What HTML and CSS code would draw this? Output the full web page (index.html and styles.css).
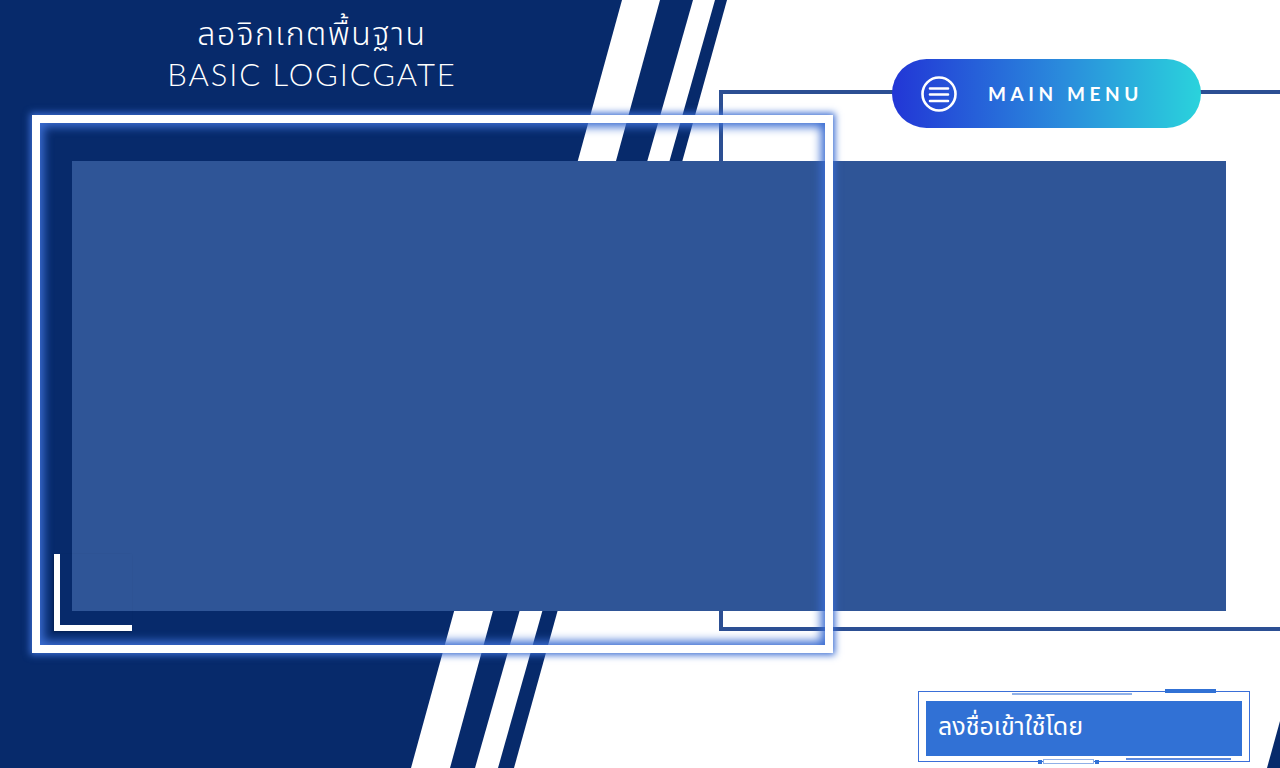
FILE: index.html
```html
<!DOCTYPE html>
<html lang="th">
<head>
<meta charset="utf-8">
<title>ลอจิกเกตพื้นฐาน - Basic Logicgate</title>
<link rel="stylesheet" href="styles.css">
</head>
<body>
<div class="stage">

  <!-- background stripes -->
  <svg class="bg" width="1280" height="768" viewBox="0 0 1280 768">
    <polygon points="0,0 622,0 411,768 0,768" fill="#072a6b"/>
    <polygon points="660,0 693,0 475,768 450,768" fill="#072a6b"/>
    <polygon points="715,0 727,0 514,768 498,768" fill="#072a6b"/>
    <polygon points="1267,768 1280,721 1280,768" fill="#072a6b"/>
  </svg>

  <div class="outline"></div>

  <div class="title">
    <div class="title-th">ลอจิกเกตพื้นฐาน</div>
    <div class="title-en">BASIC LOGICGATE</div>
  </div>

  <div class="screen"></div>

  <div class="frame"></div>
  <div class="corner"></div>

  <a class="menu" href="#">
    <svg class="menu-icon" width="38" height="38" viewBox="0 0 38 38">
      <circle cx="19" cy="19" r="16.5" fill="none" stroke="#fff" stroke-width="2.6"/>
      <path d="M10 13.5h18M10 19.5h18M10 26h18" stroke="#fff" stroke-width="2.6" stroke-linecap="round"/>
    </svg>
    <span>MAIN MENU</span>
  </a>

  <div class="login">
    <div class="login-top-line"></div>
    <div class="login-top-bar"></div>
    <div class="login-box">ลงชื่อเข้าใช้โดย</div>
    <div class="login-bottom-pill"></div>
    <div class="login-bottom-line"></div>
  </div>

</div>
</body>
</html>
```

FILE: styles.css
```css
body {
 margin: 0;
 background: #fff;
 font-family: "Noto Sans Thai", "Noto Sans", "DejaVu Sans", sans-serif;
}

.stage {
 position: relative;
 width: 1280px;
 height: 768px;
 overflow: hidden;
 background: #fff;
}

.bg {
 position: absolute;
 left: 0;
 top: 0;
}

/* right hand outline box */
.outline {
 position: absolute;
 left: 719px;
 top: 90px;
 width: 600px;
 height: 533px;
 border: 4px solid #2c4f93;
}

.title {
 position: relative;
 width: 624px;
 height: 161px;
 box-sizing: border-box;
 padding-top: 14px;
 text-align: center;
 color: #fff;
}
.title-th {
 font-size: 32px;
 font-weight: 300;
 line-height: 42px;
 letter-spacing: 1.5px;
}
.title-en {
 font-family: Lato, "Noto Sans", sans-serif;
 font-weight: 300;
 font-size: 31px;
 line-height: 36px;
 letter-spacing: 1.9px;
}

.screen {
 position: relative;
 margin-left: 72px;
 width: 1154px;
 height: 450px;
 background: #2f5597;
}

/* glowing white frame over the left half */
.frame {
 position: absolute;
 left: 32px;
 top: 115px;
 width: 785px;
 height: 522px;
 border: 8px solid #fff;
 box-shadow: 0 0 7px 2px #3b6dd2, inset 0 0 10px 4px #3b6dd2;
}

.corner {
 position: absolute;
 left: 54px;
 top: 554px;
 width: 72px;
 height: 71px;
 border-left: 6px solid #fff;
 border-bottom: 6px solid #fff;
 box-shadow: -1px 1px 2px rgba(0,0,0,.25);
}

.menu {
 position: absolute;
 left: 892px;
 top: 59px;
 width: 309px;
 height: 69px;
 box-sizing: border-box;
 padding-left: 28px;
 border-radius: 35px;
 background: linear-gradient(90deg, #2236d6 0%, #2a8bdc 55%, #2ad3dc 100%);
 display: flex;
 align-items: center;
 gap: 30px;
 color: #fff;
 text-decoration: none;
 font-family: Lato, "Open Sans", sans-serif;
 font-weight: 700;
 font-size: 19px;
 letter-spacing: 4.6px;
}
.menu-icon {
 flex: none;
}

.login {
 position: absolute;
 left: 918px;
 top: 691px;
 width: 332px;
 height: 71px;
 box-sizing: border-box;
 border: 1px solid #3a6fd8;
 padding: 9px 7px 5px 7px;
}
.login-box {
 height: 55px;
 background: #3171d5;
 color: #fff;
 font-size: 25px;
 line-height: 52px;
 padding-left: 12px;
}
.login-top-line {
 position: absolute;
 left: 93px;
 top: 1px;
 width: 120px;
 height: 2px;
 background: #8fb0e8;
}
.login-top-bar {
 position: absolute;
 left: 246px;
 top: -3px;
 width: 51px;
 height: 4px;
 background: #3171d5;
}
.login-bottom-line {
 position: absolute;
 left: 207px;
 top: 66px;
 width: 105px;
 height: 2px;
 background: #5a88de;
}
.login-bottom-pill {
 position: absolute;
 left: 124px;
 top: 67px;
 width: 49px;
 height: 3px;
 border: 1px solid #8fb0e8;
 background: #fff;
}
.login-bottom-pill::before,
.login-bottom-pill::after {
 content: "";
 position: absolute;
 top: 0;
 width: 4px;
 height: 4px;
 background: #3171d5;
}
.login-bottom-pill::before { left: -6px; }
.login-bottom-pill::after { right: -6px; }
```
